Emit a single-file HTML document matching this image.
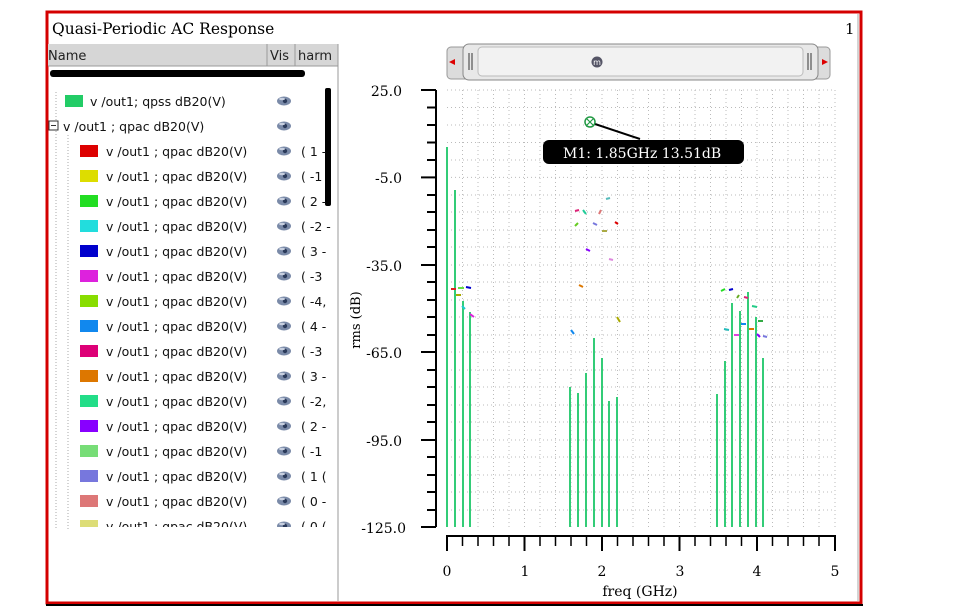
<!DOCTYPE html>
<html><head><meta charset="utf-8"><style>
body{margin:0;background:#fff;width:963px;height:614px;overflow:hidden;position:relative}
svg{position:absolute;left:0;top:0}
</style></head><body>
<svg width="963" height="614" xmlns="http://www.w3.org/2000/svg" font-family="DejaVu Sans, Liberation Sans, sans-serif">
<rect x="47" y="12" width="814" height="591" fill="#fff" stroke="#d40000" stroke-width="3"/>
<line x1="46" y1="605" x2="863" y2="605" stroke="#000" stroke-width="2"/>
<line x1="858" y1="14" x2="858" y2="601" stroke="#aaa" stroke-width="1"/>
<text x="52" y="34" font-family="DejaVu Serif, Liberation Serif, serif" font-size="15.5">Quasi-Periodic AC Response</text>
<text x="845" y="34" font-family="DejaVu Serif, Liberation Serif, serif" font-size="15">1</text>
<rect x="48" y="44" width="290" height="22" fill="#d6d6d6"/>
<line x1="48" y1="66" x2="338" y2="66" stroke="#999"/>
<line x1="267" y1="44" x2="267" y2="66" stroke="#999"/>
<line x1="295" y1="44" x2="295" y2="66" stroke="#999"/>
<line x1="338" y1="44" x2="338" y2="601" stroke="#999"/>
<text x="48" y="60" font-size="13" fill="#222">Name</text>
<text x="270" y="60" font-size="13" fill="#222">Vis</text>
<text x="298" y="60" font-size="13" fill="#222">harm</text>
<rect x="50" y="70" width="255" height="7" rx="3" fill="#000"/>
<rect x="325" y="88" width="6" height="118" rx="2" fill="#000"/>
<defs><g id="eye"><ellipse cx="0" cy="0" rx="7" ry="4.5" fill="#7a8aa8"/><circle cx="1" cy="0" r="2.2" fill="#2a3a5a"/><ellipse cx="-2" cy="-2" rx="3" ry="1.2" fill="#c8d0e0"/></g></defs>
<g font-size="12.5" fill="#111">
<line x1="56" y1="92" x2="56" y2="530" stroke="#aaa" stroke-dasharray="1,2"/>
<line x1="68" y1="135" x2="68" y2="530" stroke="#aaa" stroke-dasharray="1,2"/>
<rect x="65" y="95" width="18" height="12" fill="#22cc66"/>
<text x="90" y="106">v /out1; qpss dB20(V)</text>
<rect x="49" y="121" width="9" height="9" fill="#fff" stroke="#333"/><line x1="51" y1="125.5" x2="56" y2="125.5" stroke="#333"/>
<text x="63" y="131">v /out1 ; qpac dB20(V)</text>
<use href="#eye" x="284" y="101"/><use href="#eye" x="284" y="126"/>
<rect x="80" y="145" width="18" height="12" fill="#dd0000"/><text x="106" y="156">v /out1 ; qpac dB20(V)</text><use href="#eye" x="284" y="151"/><text x="301" y="156">( 1 -</text>
<rect x="80" y="170" width="18" height="12" fill="#dddd00"/><text x="106" y="181">v /out1 ; qpac dB20(V)</text><use href="#eye" x="284" y="176"/><text x="301" y="181">( -1</text>
<rect x="80" y="195" width="18" height="12" fill="#22dd22"/><text x="106" y="206">v /out1 ; qpac dB20(V)</text><use href="#eye" x="284" y="201"/><text x="301" y="206">( 2 -</text>
<rect x="80" y="220" width="18" height="12" fill="#22dddd"/><text x="106" y="231">v /out1 ; qpac dB20(V)</text><use href="#eye" x="284" y="226"/><text x="301" y="231">( -2 -</text>
<rect x="80" y="245" width="18" height="12" fill="#0000cc"/><text x="106" y="256">v /out1 ; qpac dB20(V)</text><use href="#eye" x="284" y="251"/><text x="301" y="256">( 3 -</text>
<rect x="80" y="270" width="18" height="12" fill="#dd22dd"/><text x="106" y="281">v /out1 ; qpac dB20(V)</text><use href="#eye" x="284" y="276"/><text x="301" y="281">( -3</text>
<rect x="80" y="295" width="18" height="12" fill="#88dd00"/><text x="106" y="306">v /out1 ; qpac dB20(V)</text><use href="#eye" x="284" y="301"/><text x="301" y="306">( -4,</text>
<rect x="80" y="320" width="18" height="12" fill="#1188ee"/><text x="106" y="331">v /out1 ; qpac dB20(V)</text><use href="#eye" x="284" y="326"/><text x="301" y="331">( 4 -</text>
<rect x="80" y="345" width="18" height="12" fill="#dd0077"/><text x="106" y="356">v /out1 ; qpac dB20(V)</text><use href="#eye" x="284" y="351"/><text x="301" y="356">( -3</text>
<rect x="80" y="370" width="18" height="12" fill="#dd7700"/><text x="106" y="381">v /out1 ; qpac dB20(V)</text><use href="#eye" x="284" y="376"/><text x="301" y="381">( 3 -</text>
<rect x="80" y="395" width="18" height="12" fill="#22dd88"/><text x="106" y="406">v /out1 ; qpac dB20(V)</text><use href="#eye" x="284" y="401"/><text x="301" y="406">( -2,</text>
<rect x="80" y="420" width="18" height="12" fill="#8800ff"/><text x="106" y="431">v /out1 ; qpac dB20(V)</text><use href="#eye" x="284" y="426"/><text x="301" y="431">( 2 -</text>
<rect x="80" y="445" width="18" height="12" fill="#77dd77"/><text x="106" y="456">v /out1 ; qpac dB20(V)</text><use href="#eye" x="284" y="451"/><text x="301" y="456">( -1</text>
<rect x="80" y="470" width="18" height="12" fill="#7777dd"/><text x="106" y="481">v /out1 ; qpac dB20(V)</text><use href="#eye" x="284" y="476"/><text x="301" y="481">( 1 (</text>
<rect x="80" y="495" width="18" height="12" fill="#dd7777"/><text x="106" y="506">v /out1 ; qpac dB20(V)</text><use href="#eye" x="284" y="501"/><text x="301" y="506">( 0 -</text>
<svg x="0" y="0" width="338" height="527"><rect x="80" y="520" width="18" height="12" fill="#dddd77"/><text x="106" y="531">v /out1 ; qpac dB20(V)</text><use href="#eye" x="284" y="526"/><text x="301" y="531">( 0 (</text></svg>
</g>
<rect x="447" y="47" width="383" height="32" rx="4" fill="#dcdcdc" stroke="#999"/>
<rect x="463" y="44" width="355" height="36" rx="6" fill="#e8e8e8" stroke="#888"/>
<rect x="478" y="47" width="325" height="29" rx="4" fill="#f2f2f2" stroke="#bbb"/>
<path d="M449 62 l6 -3 v6 z" fill="#d00"/><path d="M828 62 l-6 -3 v6 z" fill="#d00"/>
<line x1="469" y1="53" x2="469" y2="70" stroke="#333"/><line x1="472" y1="53" x2="472" y2="70" stroke="#333"/>
<line x1="808" y1="53" x2="808" y2="70" stroke="#333"/><line x1="811" y1="53" x2="811" y2="70" stroke="#333"/>
<circle cx="597" cy="62" r="5.5" fill="#556"/><text x="597" y="65" font-size="8" fill="#fff" text-anchor="middle">m</text>
<g stroke="#bbb" stroke-dasharray="1,3" stroke-width="1">
<line x1="447" y1="90" x2="835" y2="90"/><line x1="447" y1="107.5" x2="835" y2="107.5"/><line x1="447" y1="125" x2="835" y2="125"/><line x1="447" y1="142.5" x2="835" y2="142.5"/><line x1="447" y1="160" x2="835" y2="160"/><line x1="447" y1="177.4" x2="835" y2="177.4"/><line x1="447" y1="195" x2="835" y2="195"/><line x1="447" y1="212" x2="835" y2="212"/><line x1="447" y1="230" x2="835" y2="230"/><line x1="447" y1="247" x2="835" y2="247"/><line x1="447" y1="265" x2="835" y2="265"/><line x1="447" y1="282" x2="835" y2="282"/><line x1="447" y1="300" x2="835" y2="300"/><line x1="447" y1="317" x2="835" y2="317"/><line x1="447" y1="335" x2="835" y2="335"/><line x1="447" y1="352" x2="835" y2="352"/><line x1="447" y1="370" x2="835" y2="370"/><line x1="447" y1="387" x2="835" y2="387"/><line x1="447" y1="405" x2="835" y2="405"/><line x1="447" y1="422" x2="835" y2="422"/><line x1="447" y1="440" x2="835" y2="440"/><line x1="447" y1="457" x2="835" y2="457"/><line x1="447" y1="475" x2="835" y2="475"/><line x1="447" y1="492" x2="835" y2="492"/><line x1="447" y1="510" x2="835" y2="510"/>
<line x1="462.5" y1="90" x2="462.5" y2="527"/><line x1="478" y1="90" x2="478" y2="527"/><line x1="493.5" y1="90" x2="493.5" y2="527"/><line x1="509" y1="90" x2="509" y2="527"/><line x1="524.5" y1="90" x2="524.5" y2="527"/><line x1="540" y1="90" x2="540" y2="527"/><line x1="555.5" y1="90" x2="555.5" y2="527"/><line x1="571" y1="90" x2="571" y2="527"/><line x1="586.5" y1="90" x2="586.5" y2="527"/><line x1="602" y1="90" x2="602" y2="527"/><line x1="617.5" y1="90" x2="617.5" y2="527"/><line x1="633" y1="90" x2="633" y2="527"/><line x1="648.5" y1="90" x2="648.5" y2="527"/><line x1="664" y1="90" x2="664" y2="527"/><line x1="679.5" y1="90" x2="679.5" y2="527"/><line x1="695" y1="90" x2="695" y2="527"/><line x1="710.5" y1="90" x2="710.5" y2="527"/><line x1="726" y1="90" x2="726" y2="527"/><line x1="741.5" y1="90" x2="741.5" y2="527"/><line x1="757" y1="90" x2="757" y2="527"/><line x1="772.5" y1="90" x2="772.5" y2="527"/><line x1="788" y1="90" x2="788" y2="527"/><line x1="803.5" y1="90" x2="803.5" y2="527"/><line x1="819" y1="90" x2="819" y2="527"/><line x1="835" y1="90" x2="835" y2="527"/>
</g>
<g stroke="#000" stroke-width="2">
<line x1="436" y1="90" x2="436" y2="527"/>
<line x1="421" y1="90" x2="436" y2="90"/><line x1="421" y1="177.4" x2="436" y2="177.4"/><line x1="421" y1="265" x2="436" y2="265"/><line x1="421" y1="352" x2="436" y2="352"/><line x1="421" y1="440" x2="436" y2="440"/><line x1="421" y1="527" x2="436" y2="527"/>
<line x1="427" y1="107.5" x2="436" y2="107.5"/><line x1="427" y1="125" x2="436" y2="125"/><line x1="427" y1="142.5" x2="436" y2="142.5"/><line x1="427" y1="160" x2="436" y2="160"/><line x1="427" y1="195" x2="436" y2="195"/><line x1="427" y1="212" x2="436" y2="212"/><line x1="427" y1="230" x2="436" y2="230"/><line x1="427" y1="247" x2="436" y2="247"/><line x1="427" y1="282" x2="436" y2="282"/><line x1="427" y1="300" x2="436" y2="300"/><line x1="427" y1="317" x2="436" y2="317"/><line x1="427" y1="335" x2="436" y2="335"/><line x1="427" y1="370" x2="436" y2="370"/><line x1="427" y1="387" x2="436" y2="387"/><line x1="427" y1="405" x2="436" y2="405"/><line x1="427" y1="422" x2="436" y2="422"/><line x1="427" y1="457" x2="436" y2="457"/><line x1="427" y1="475" x2="436" y2="475"/><line x1="427" y1="492" x2="436" y2="492"/><line x1="427" y1="510" x2="436" y2="510"/>
</g>
<g font-family="DejaVu Serif, Liberation Serif, serif" font-size="14" text-anchor="end">
<text x="402" y="96">25.0</text><text x="402" y="183">-5.0</text><text x="402" y="271">-35.0</text><text x="402" y="358">-65.0</text><text x="402" y="446">-95.0</text><text x="406" y="533">-125.0</text>
</g>
<text transform="translate(360,320) rotate(-90)" font-family="DejaVu Serif, Liberation Serif, serif" font-size="13" text-anchor="middle">rms (dB)</text>
<g stroke="#000" stroke-width="2">
<line x1="446" y1="536" x2="836" y2="536"/>
<line x1="447" y1="536" x2="447" y2="551"/><line x1="524.5" y1="536" x2="524.5" y2="551"/><line x1="602" y1="536" x2="602" y2="551"/><line x1="679.5" y1="536" x2="679.5" y2="551"/><line x1="757" y1="536" x2="757" y2="551"/><line x1="835" y1="536" x2="835" y2="551"/>
</g>
<g stroke="#000" stroke-width="1.5">
<line x1="462.5" y1="536" x2="462.5" y2="546"/><line x1="478" y1="536" x2="478" y2="546"/><line x1="493.5" y1="536" x2="493.5" y2="546"/><line x1="509" y1="536" x2="509" y2="546"/><line x1="540" y1="536" x2="540" y2="546"/><line x1="555.5" y1="536" x2="555.5" y2="546"/><line x1="571" y1="536" x2="571" y2="546"/><line x1="586.5" y1="536" x2="586.5" y2="546"/><line x1="617.5" y1="536" x2="617.5" y2="546"/><line x1="633" y1="536" x2="633" y2="546"/><line x1="648.5" y1="536" x2="648.5" y2="546"/><line x1="664" y1="536" x2="664" y2="546"/><line x1="695" y1="536" x2="695" y2="546"/><line x1="710.5" y1="536" x2="710.5" y2="546"/><line x1="726" y1="536" x2="726" y2="546"/><line x1="741.5" y1="536" x2="741.5" y2="546"/><line x1="772.5" y1="536" x2="772.5" y2="546"/><line x1="788" y1="536" x2="788" y2="546"/><line x1="803.5" y1="536" x2="803.5" y2="546"/><line x1="819" y1="536" x2="819" y2="546"/>
</g>
<g font-family="DejaVu Serif, Liberation Serif, serif" font-size="14" text-anchor="middle">
<text x="447" y="576">0</text><text x="525" y="576">1</text><text x="602" y="576">2</text><text x="680" y="576">3</text><text x="757" y="576">4</text><text x="835" y="576">5</text>
<text x="640" y="596">freq (GHz)</text>
</g>
<g stroke="#33cc77" stroke-width="2">
<line x1="447" y1="147" x2="447" y2="527"/><line x1="455" y1="190" x2="455" y2="527"/><line x1="463" y1="301" x2="463" y2="527"/><line x1="470" y1="312" x2="470" y2="527"/>
<line x1="570" y1="387" x2="570" y2="527"/><line x1="578" y1="393" x2="578" y2="527"/><line x1="586" y1="373" x2="586" y2="527"/><line x1="594" y1="338" x2="594" y2="527"/><line x1="602" y1="358" x2="602" y2="527"/><line x1="609" y1="401" x2="609" y2="527"/><line x1="617" y1="397" x2="617" y2="527"/>
<line x1="717" y1="394" x2="717" y2="527"/><line x1="725" y1="361" x2="725" y2="527"/><line x1="732" y1="303" x2="732" y2="527"/><line x1="740" y1="311" x2="740" y2="527"/><line x1="748" y1="292" x2="748" y2="527"/><line x1="756" y1="317" x2="756" y2="527"/><line x1="763" y1="358" x2="763" y2="527"/>
</g>
<g stroke-width="2" fill="none">
<path d="M451 289h5" stroke="#dd2222"/><path d="M458 288h6" stroke="#66dd44"/><path d="M466 287l5 1" stroke="#0000cc"/><path d="M456 295h5" stroke="#aaaa00"/>
<path d="M462 306l3 3" stroke="#22cccc"/><path d="M470 314l4 3" stroke="#dd22dd"/>
<path d="M575 226l3 -3" stroke="#66cc22"/><path d="M575 211l4 -1" stroke="#dd2277"/><path d="M583 210l3 4" stroke="#22cc99"/><path d="M599 214l2 -4" stroke="#dd7777"/><path d="M606 199l4 -1" stroke="#55bbbb"/>
<path d="M593 223l4 2" stroke="#7777dd"/><path d="M602 231h5" stroke="#aaaa44"/><path d="M615 222l3 2" stroke="#dd0000"/><path d="M586 249l4 2" stroke="#8800ff"/><path d="M609 259l4 1" stroke="#dd88dd"/>
<path d="M579 285l4 2" stroke="#dd7700"/><path d="M571 330l3 4" stroke="#1188ee"/><path d="M617 317l3 5" stroke="#aaaa00"/>
<path d="M721 291l4 -2" stroke="#22dd22"/><path d="M729 290l4 -1" stroke="#0000cc"/><path d="M737 298l2 -3" stroke="#66aa22"/><path d="M744 297l4 1" stroke="#dd2277"/>
<path d="M752 306l5 1" stroke="#22cc88"/><path d="M758 321h5" stroke="#33aa44"/><path d="M724 329l5 1" stroke="#22bbbb"/><path d="M734 335h5" stroke="#dd44dd"/>
<path d="M741 324h5" stroke="#1188ee"/><path d="M749 329h5" stroke="#dd7700"/><path d="M757 334l3 3" stroke="#8800ff"/><path d="M763 336l4 1" stroke="#7777dd"/>
</g>
<line x1="592" y1="123" x2="640" y2="139" stroke="#000" stroke-width="2"/>
<circle cx="590" cy="122" r="5" fill="#fff" stroke="#229944" stroke-width="1.5"/>
<path d="M587 119l6 6M593 119l-6 6" stroke="#229944" stroke-width="1.2"/>
<rect x="543" y="140" width="201" height="24" rx="6" fill="#000"/>
<text x="563" y="158" font-family="DejaVu Serif, Liberation Serif, serif" font-size="14" fill="#fff">M1: 1.85GHz 13.51dB</text>
</svg>
</body></html>
